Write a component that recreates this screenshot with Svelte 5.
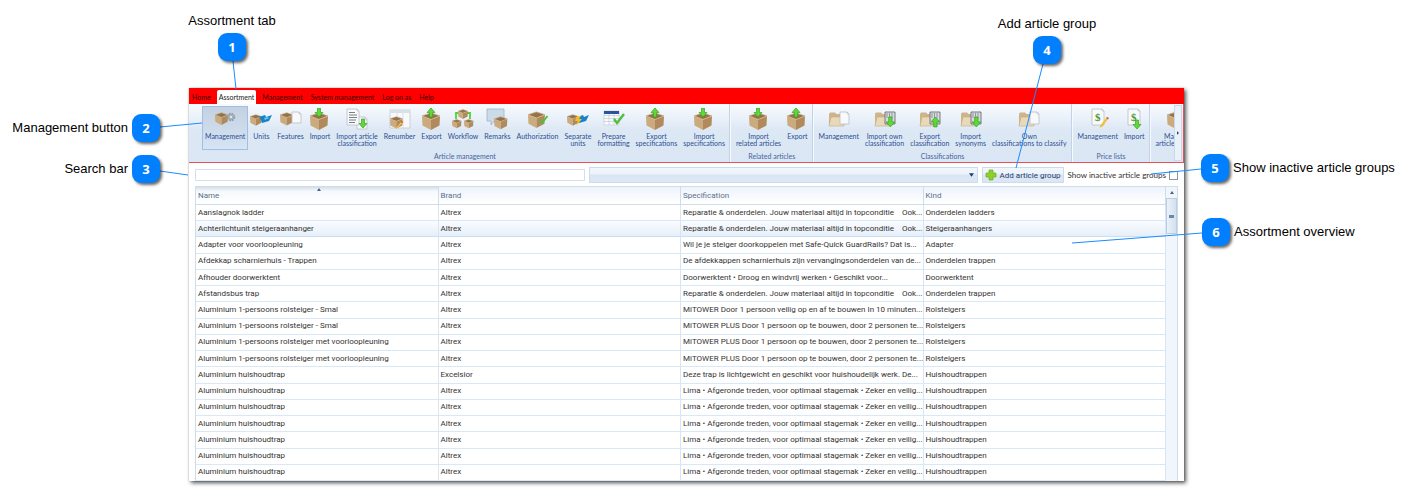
<script>
  const tabs = ['Home', 'Assortment', 'Management', 'System management', 'Log on as', 'Help'];

  const groups = [
    {
      title: 'Article management',
      tools: [
        ['boxGear', 'Management'],
        ['boxUnits', 'Units'],
        ['boxPage', 'Features'],
        ['boxIn', 'Import'],
        ['pageIn', 'Import article', 'classification'],
        ['renumber', 'Renumber'],
        ['boxOut', 'Export'],
        ['workflow', 'Workflow'],
        ['remarks', 'Remarks'],
        ['boxCheck', 'Authorization'],
        ['separate', 'Separate', 'units'],
        ['tableCheck', 'Prepare', 'formatting'],
        ['boxOut', 'Export', 'specifications'],
        ['boxIn', 'Import', 'specifications']
      ]
    },
    {
      title: 'Related articles',
      tools: [
        ['boxIn', 'Import', 'related articles'],
        ['boxOut', 'Export']
      ]
    },
    {
      title: 'Classifications',
      tools: [
        ['folderPage', 'Management'],
        ['folderIn', 'Import own', 'classification'],
        ['folderOut', 'Export', 'classification'],
        ['folderIn', 'Import', 'synonyms'],
        ['folderPage', 'Own', 'classifications to classify']
      ]
    },
    {
      title: 'Price lists',
      tools: [
        ['priceEdit', 'Management'],
        ['priceIn', 'Import']
      ]
    },
    { title: '', tools: [['boxPlain', 'Margins', 'article groups']] }
  ];

  const repair = 'Reparatie & onderdelen. Jouw materiaal altijd in topconditie\u00a0\u00a0\u00a0 Ook...';
  const plus = 'MiTOWER PLUS Door 1 persoon op te bouwen, door 2 personen te...';
  const lima = 'Lima • Afgeronde treden, voor optimaal stagemak • Zeker en veilig...';

  const rows = [
    ['Aanslagnok ladder', 'Altrex', repair, 'Onderdelen ladders'],
    ['Achterlichtunit steigeraanhanger', 'Altrex', repair, 'Steigeraanhangers'],
    ['Adapter voor voorloopleuning', 'Altrex', 'Wil je je steiger doorkoppelen met Safe-Quick GuardRails? Dat is...', 'Adapter'],
    ['Afdekkap scharnierhuis - Trappen', 'Altrex', 'De afdekkappen scharnierhuis zijn vervangingsonderdelen van de...', 'Onderdelen trappen'],
    ['Afhouder doorwerktent', 'Altrex', 'Doorwerktent • Droog en windvrij werken • Geschikt voor...', 'Doorwerktent'],
    ['Afstandsbus trap', 'Altrex', repair, 'Onderdelen trappen'],
    ['Aluminium 1-persoons rolsteiger - Smal', 'Altrex', 'MiTOWER Door 1 persoon veilig op en af te bouwen In 10 minuten...', 'Rolsteigers'],
    ['Aluminium 1-persoons rolsteiger - Smal', 'Altrex', plus, 'Rolsteigers'],
    ['Aluminium 1-persoons rolsteiger met voorloopleuning', 'Altrex', plus, 'Rolsteigers'],
    ['Aluminium 1-persoons rolsteiger met voorloopleuning', 'Altrex', plus, 'Rolsteigers'],
    ['Aluminium huishoudtrap', 'Excelsior', 'Deze trap is lichtgewicht en geschikt voor huishoudelijk werk. De...', 'Huishoudtrappen'],
    ...Array.from({ length: 6 }, () => ['Aluminium huishoudtrap', 'Altrex', lima, 'Huishoudtrappen'])
  ];

  const callouts = [
    { n: 1, text: 'Assortment tab', x: 218, y: 33, side: 'top', line: [233, 61, 236, 89] },
    { n: 2, text: 'Management button', x: 132, y: 114, side: 'left', line: [160, 127, 202, 123] },
    { n: 3, text: 'Search bar', x: 132, y: 155, side: 'left', line: [160, 171, 188, 175] },
    { n: 4, text: 'Add article group', x: 1033, y: 36, side: 'top', line: [1043, 64, 1016, 168] },
    { n: 5, text: 'Show inactive article groups', x: 1201, y: 154, side: 'right', line: [1201, 169, 1151, 174] },
    { n: 6, text: 'Assortment overview', x: 1202, y: 218, side: 'right', line: [1202, 233, 1072, 243] }
  ];
</script>

{#snippet box(x, y, s)}
  <g transform="translate({x} {y}) scale({s})">
    <path d="M0 4 9 7.500V18L.5 13.500Z" fill="#cbaa7e" />
    <path d="M18 4 9 7.500V18l8.500-4.500Z" fill="#b08a5b" />
    <path d="M0 4 9 1l9 3-9 3.500Z" fill="#94734a" />
    <path d="M0 4 9 1l9 3" fill="none" stroke="#c4a478" stroke-width=".8" />
    <path d="M0 4 9 7.500 18 4" fill="none" stroke="#d9bf96" stroke-width=".8" />
  </g>
{/snippet}

{#snippet arrow(x, y, down)}
  <path
    transform="translate({x} {y}) {down ? '' : 'rotate(180 4 4.5)'}"
    d="M2.500 0h3v4.500H8L4 9 0 4.500h2.500Z"
    fill="#5fd83a"
    stroke="#3aa522"
    stroke-width=".7"
  />
{/snippet}

{#snippet page(x, y, w, h)}
  <g transform="translate({x} {y})">
    <path d="M0 0H{w - 2}L{w} 2V{h}H0Z" fill="#f8f9fa" stroke="#b9bec4" stroke-width=".8" />
    <path d="M{w - 2} 0V2H{w}" fill="none" stroke="#b9bec4" stroke-width=".6" />
  </g>
{/snippet}

{#snippet folder()}
  <path d="M1 6 2 4.500h5L8.500 6H15v12H2L1 17Z" fill="#cdb48c" />
  <path d="M1 18 3 9h14l-1 9Z" fill="#ead9b8" stroke="#c5ab80" stroke-width=".6" />
{/snippet}

{#snippet tick(x, y, s)}
  <path transform="translate({x} {y}) scale({s})" d="M0 5 3 9 10 0" fill="none" stroke="#4fbf3c" stroke-width="2.400" />
{/snippet}

{#snippet priceTag()}
  {@render page(5, 1, 12, 16)}
  <text class="dollar" x="8" y="13">$</text>
{/snippet}

{#snippet icon(kind)}
  <svg class="icon" viewBox="0 0 22 22" aria-hidden="true">
    {#if kind === 'boxGear'}
      {@render box(1, 4, 0.72)}
      <circle cx="17" cy="9" r="3.400" fill="#a3b0b8" stroke="#93a0a9" stroke-width="1.800" stroke-dasharray="1.600 1.100" />
      <circle cx="17" cy="9" r="1.300" fill="#dfe6eb" />
    {:else if kind === 'boxUnits'}
      {@render box(0, 6, 0.65)}
      <path d="m9 9 6-2 1 2 6-2-3 6-7 2-1-3Z" fill="#1583c9" />
      <path d="m14 10 4-1 1 1-4 2Z" fill="#70c4ed" />
    {:else if kind === 'boxPage'}
      {@render box(0, 4, 0.75)}
      {@render page(12, 4, 9, 11)}
    {:else if kind === 'boxIn'}
      {@render box(1, 4, 1)}
      {@render arrow(6, 0, true)}
    {:else if kind === 'boxOut'}
      {@render box(1, 4, 1)}
      {@render arrow(6, 0, false)}
    {:else if kind === 'boxPlain'}
      {@render box(2, 3, 1)}
    {:else if kind === 'pageIn'}
      {@render page(11, 9, 10, 12)}
      {@render page(1, 1, 12, 16)}
      <path d="M3 4.500h6M3 7h8M3 9.500h8M3 12h7M3 14.500h6" stroke="#7a7f85" stroke-width="1" />
      {@render arrow(13, 11, true)}
    {:else if kind === 'renumber'}
      <path d="M1 2h20v18H1Z" fill="#f7f9fb" stroke="#c0c8d0" stroke-width=".8" />
      <path d="M1 2h20v3H1Z" fill="#d9e1e8" />
      <path d="M8 5v15M14 5v15" stroke="#d6dde3" stroke-width=".8" />
      {@render box(1, 8, 0.7)}
      <path d="m7 20 5-6 1.500 1-5 5Z" fill="#f5bd3c" />
      <path d="m12 14 1-1 1.500 1-1 1Z" fill="#d9534a" />
    {:else if kind === 'workflow'}
      <path d="M7 5H4v6M15 5h3v6" fill="none" stroke="#4fd336" stroke-width="1.800" />
      {@render box(6, 1, 0.55)}
      {@render box(0, 11, 0.52)}
      {@render box(12, 11, 0.52)}
    {:else if kind === 'remarks'}
      <path d="M1 1h17v12H8l-3 4v-4H1Z" fill="#ccdbe8" stroke="#9fb3c5" stroke-width=".8" />
      {@render box(8, 8, 0.74)}
    {:else if kind === 'boxCheck'}
      {@render box(1, 3, 0.94)}
      {@render tick(13, 8, 0.75)}
    {:else if kind === 'separate'}
      {@render box(0, 6, 0.65)}
      <path d="m10 9 6-2 1 2 5-2-3 6-7 2-1-3Z" fill="#1583c9" />
      <path d="m10 8 4 0-2 3h3l-6 7 2-5H8Z" fill="#f6bb2e" />
    {:else if kind === 'tableCheck'}
      <path d="M1 3h15v14H1Z" fill="#f8fafc" stroke="#c3ccd5" stroke-width=".7" />
      <path d="M1 7.500h15M1 10.500h15M1 13.500h15M6 6v11M11 6v11" stroke="#c3ccd5" stroke-width=".7" />
      <path d="M1 3h15v3H1Z" fill="#27559f" />
      {@render tick(11, 6, 1)}
    {:else if kind === 'folderPage'}
      {@render folder()}
      {@render page(12, 4, 9, 12)}
    {:else if kind === 'folderIn' || kind === 'folderOut'}
      {@render folder()}
      <path d="M11 4h10v12H11Z" fill="#d7dade" stroke="#6b7177" stroke-width=".9" />
      <path d="M13 5v5M15.500 5v5M18 5v5" stroke="#8b9198" stroke-width=".9" />
      <g transform="translate(12 9) scale(1.1)">{@render arrow(0, 0, kind === 'folderIn')}</g>
    {:else if kind === 'priceEdit'}
      {@render priceTag()}
      <path d="m13 18 6-8 2 1-6 8-2.500.500Z" fill="#f5bd3c" />
      <path d="m19 10 1-1 2 1-1 1.500Z" fill="#d9534a" />
    {:else if kind === 'priceIn'}
      {@render priceTag()}
      {@render arrow(10, 12, true)}
    {/if}
  </svg>
{/snippet}

<main>
  <section class="window">
    <nav class="tabs">
      {#each tabs as tab}
        <button class:active={tab === 'Assortment'}>{tab}</button>
      {/each}
    </nav>

    <div class="ribbon">
      <div class="strip">
        {#each groups as group}
          <div class="group">
            <div class="tools">
              {#each group.tools as [kind, ...lines], i}
                <button class="tool" class:pressed={group === groups[0] && i === 0}>
                  {@render icon(kind)}
                  {#each lines as line}<span>{line}</span>{/each}
                </button>
              {/each}
            </div>
            <div class="caption">{group.title}</div>
          </div>
        {/each}
      </div>
      <button class="more" aria-label="More">
        <svg viewBox="0 0 3 5" aria-hidden="true"><path d="M0 0 3 2.500 0 5Z" fill="#1d3f75" /></svg>
      </button>
    </div>

    <div class="toolbar">
      <input class="search" type="text" aria-label="Search" />
      <div class="picker">
        <select aria-label="Filter"><option></option></select>
        <svg viewBox="0 0 6 4" aria-hidden="true"><path d="M0 0h6L3 4Z" fill="#1d3f75" /></svg>
      </div>
      <button class="add">
        <svg viewBox="0 0 12 12" aria-hidden="true">
          <path d="M4 1h4v3h3v4H8v3H4V8H1V4h3Z" fill="#8fce2b" stroke="#6fae1c" stroke-width=".7" />
        </svg>
        Add article group
      </button>
      <label class="inactive">Show inactive article groups <input type="checkbox" /></label>
    </div>

    <div class="grid">
      <table>
        <thead>
          <tr>
            <th class="sorted">
              Name
              <svg viewBox="0 0 4 3" aria-hidden="true"><path d="M0 3 2 0l2 3Z" fill="#4a6488" /></svg>
            </th>
            <th>Brand</th>
            <th>Specification</th>
            <th>Kind</th>
          </tr>
        </thead>
        <tbody>
          {#each rows as row, i}
            <tr class:current={i === 1}>
              {#each row as cell}<td>{cell}</td>{/each}
            </tr>
          {/each}
        </tbody>
      </table>
      <div class="scrollbar">
        <button class="up" aria-label="Scroll up">
          <svg viewBox="0 0 4 3" aria-hidden="true"><path d="M0 3 2 0l2 3Z" fill="#4a6488" /></svg>
        </button>
        <div class="thumb"><i></i></div>
      </div>
    </div>
  </section>

  <svg class="leaders" aria-hidden="true">
    {#each callouts as { line }}
      <line x1={line[0]} y1={line[1]} x2={line[2]} y2={line[3]} />
    {/each}
  </svg>
  {#each callouts as c}
    <div class="callout {c.side}" style="left: {c.x}px; top: {c.y}px">
      <b>{c.n}</b>
      <span>{c.text}</span>
    </div>
  {/each}
</main>

<style>
  :global(body) {
    margin: 0;
    background: #fff;
  }
  main {
    position: relative;
    padding: 88px 227px 8px 189px;
    font-family: Roboto, 'Open Sans', sans-serif;
    font-size: 8px;
    color: #333;
  }
  button,
  input,
  select {
    font: inherit;
    color: inherit;
    margin: 0;
    padding: 0;
    border: 0;
    background: none;
    box-sizing: border-box;
    border-radius: 0;
  }
  .window {
    background: #fff;
    box-shadow: 2px 2px 4px #000a, 0 0 1px #0006;
  }

  .tabs {
    display: flex;
    align-items: flex-end;
    height: 16px;
    background: #f00;
    font-family: Lato, sans-serif;
    font-size: 7px;
    line-height: 13px;
  }
  .tabs button {
    margin: 0 2px;
    padding: 0 2px;
    height: 14px;
    color: #400000;
    white-space: nowrap;
  }
  .tabs button:first-child {
    margin-left: 1px;
  }
  .tabs .active {
    background: #fff;
    color: #222;
    border-radius: 2px 2px 0 0;
  }

  .ribbon {
    display: flex;
    height: 58px;
    border-bottom: 1px solid #e8505a;
    border-right: 1px solid #e8505a;
    background: linear-gradient(#f8fbfe, #dde8f5 45%, #dbe6f4);
    font-family: Lato, sans-serif;
    font-size: 7px;
    line-height: 7px;
    color: #2b4f92;
  }
  .strip {
    display: flex;
    flex: 1;
    min-width: 0;
    overflow: hidden;
    padding-left: 12px;
  }
  .group {
    display: flex;
    flex: none;
    flex-direction: column;
    justify-content: space-between;
    padding: 2px 1px 2px 3px;
    border-right: 1px solid #c3d2e6;
    box-shadow: 1px 0 #f6f9fd;
  }
  .group:first-child {
    padding-left: 1px;
  }
  .tools {
    display: flex;
  }
  .tool {
    display: flex;
    flex-direction: column;
    align-items: center;
    min-width: 26px;
    height: 44px;
    padding: 1px 2px;
    border: 1px solid transparent;
    white-space: nowrap;
  }
  .pressed {
    border-color: #9fbfe6;
    background: linear-gradient(#c3d1e2, #cfdcec 60%, #d6e4f4);
  }
  .icon {
    flex: none;
    width: 22px;
    height: 22px;
    margin: 0 -2px 3px;
  }
  .dollar {
    font: bold 11px 'Liberation Serif', serif;
    fill: #4a9a35;
  }
  .caption {
    text-align: center;
    color: #45659c;
  }
  .more {
    flex: none;
    width: 8px;
    margin: 1px 1px 1px 0;
    border: 1px solid #c9d8ea;
    background: #eaf1f9;
  }
  .more svg {
    display: block;
    width: 2px;
    height: 4px;
    margin: auto;
  }

  .toolbar {
    display: flex;
    align-items: center;
    gap: 4px;
    padding: 4px 6px 3px;
  }
  .search,
  .picker {
    flex: 1;
    min-width: 0;
  }
  .search {
    height: 12px;
    border: 1px solid #d3e0ef;
  }
  .picker {
    position: relative;
    height: 16px;
  }
  .picker select,
  .add {
    height: 16px;
    border: 1px solid #cbdcee;
    background: linear-gradient(#f2f7fc, #ecf3fa 40%, #dae6f3 50%, #dbe7f4);
  }
  .picker select {
    display: block;
    width: 100%;
    appearance: none;
  }
  .picker svg {
    position: absolute;
    right: 4px;
    top: 6px;
    width: 5px;
    height: 4px;
  }
  .add {
    display: flex;
    align-items: center;
    gap: 3px;
    padding: 0 2px;
    white-space: nowrap;
    color: #24406e;
  }
  .add svg {
    width: 12px;
    height: 12px;
  }
  .inactive {
    display: flex;
    align-items: center;
    gap: 3px;
    font-family: Lato, sans-serif;
    white-space: nowrap;
  }
  .inactive input {
    appearance: none;
    width: 9px;
    height: 9px;
    border: 1px solid #8f959c;
    background: #fff;
  }

  .grid {
    display: flex;
    margin: 0 6px;
    border: 1px solid #cfdcea;
    border-bottom: 0;
  }
  table {
    flex: 1;
    width: 100%;
    min-width: 0;
    height: 294px;
    table-layout: fixed;
    border-collapse: separate;
    border-spacing: 0;
    line-height: 12px;
  }
  th,
  td {
    padding: 0 0 0 2px;
    text-align: left;
    font-weight: normal;
    white-space: nowrap;
    overflow: hidden;
    border-right: 1px solid #d5e6f8;
    border-bottom: 1px solid #d9e8f7;
  }
  th {
    height: 17px;
    color: #5a6f8d;
    border-color: #cfdcea;
    background: linear-gradient(#eef4fc, #fff);
  }
  .sorted {
    position: relative;
    background: linear-gradient(#d3dfeb, #f6f9fb 25%, #fff);
  }
  .sorted svg {
    position: absolute;
    left: 50%;
    top: 1px;
    width: 4px;
    height: 3px;
  }
  .current td {
    background: linear-gradient(#fafcff, #e6eff9);
    border-bottom-color: #c8def6;
  }
  .scrollbar {
    flex: none;
    width: 11px;
    background: #f1f6fd;
  }
  .scrollbar .up {
    display: block;
    width: 11px;
    height: 11px;
  }
  .up svg {
    display: block;
    width: 4px;
    height: 3px;
    margin: auto;
  }
  .thumb {
    display: flex;
    align-items: center;
    justify-content: center;
    box-sizing: border-box;
    height: 36px;
    border: 1px solid #bccde2;
    background: linear-gradient(90deg, #eaf1f9, #d3e1f0);
  }
  .thumb i {
    width: 5px;
    height: 3px;
    background: #6d86a8;
  }

  .leaders {
    position: absolute;
    inset: 0;
    width: 100%;
    height: 100%;
    pointer-events: none;
  }
  .leaders line {
    stroke: #1a8cff;
    stroke-width: 1;
  }
  .callout {
    position: absolute;
    display: flex;
    align-items: center;
    gap: 4px;
    width: 28px;
    height: 28px;
    font: 13px/16px 'Liberation Sans', sans-serif;
    color: #000;
    white-space: nowrap;
  }
  .callout b {
    flex: none;
    width: 28px;
    font: bold 13px/28px 'Open Sans', sans-serif;
    text-align: center;
    color: #fff;
    background: #0080ff;
    border-radius: 9px;
    box-shadow: 2px 2px 3px #0009;
  }
  .callout.left {
    flex-direction: row-reverse;
    justify-content: flex-start;
  }
  .callout.top {
    flex-direction: column-reverse;
  }
</style>
